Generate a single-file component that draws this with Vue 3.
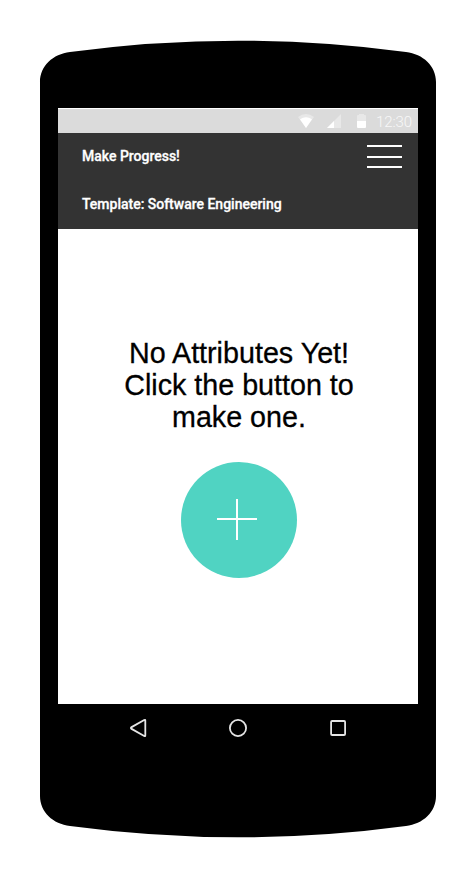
<script setup>
const title = 'Make Progress!'
const template = 'Template: Software Engineering'
const message = ['No Attributes Yet!', 'Click the button to', 'make one.']
</script>

<template>
  <main class="stage">
    <svg class="shell" viewBox="0 0 476 878" aria-hidden="true">
      <path d="M40 82C40 66 53 54 70 52Q238 29.4 406 52C423 54 436 66 436 82V796C436 812 423 824 406 826Q238 848.6 70 826C53 824 40 812 40 796Z" />
    </svg>
    <section class="screen">
      <div class="status">
        <svg class="wifi" viewBox="0 0 16 14">
          <path class="faint" d="M0 3Q8 -3 16 3L8 14Z" />
          <path class="bright" d="M2 5.3Q8 1 14 5.3L8 14Z" />
        </svg>
        <svg class="signal" viewBox="0 0 14 14">
          <path class="faint" d="M0 14L14 0V14Z" />
          <path class="bright" d="M0 14L7 7V14Z" />
        </svg>
        <svg class="battery" viewBox="0 0 9 14">
          <path class="faint" d="M0 2Q0 1 1 1H2V0H7V1H8Q9 1 9 2V7H0Z" />
          <path class="bright" d="M0 7H9V13Q9 14 8 14H1Q0 14 0 13Z" />
        </svg>
        <span class="time">12:30</span>
      </div>
      <header class="header">
        <div class="row">
          <h1 class="label">{{ title }}</h1>
          <button class="menu" aria-label="Menu">
            <svg viewBox="0 0 35 23"><path d="M0 1H35M0 12H35M0 22H35" /></svg>
          </button>
        </div>
        <div class="row">
          <h2 class="label">{{ template }}</h2>
        </div>
      </header>
      <div class="content">
        <p class="message">
          <span v-for="line in message" :key="line">{{ line }}</span>
        </p>
        <button class="add" aria-label="Add">
          <svg viewBox="0 0 116 116"><path d="M36 57H76M56 37V78" /></svg>
        </button>
      </div>
    </section>
    <nav class="nav">
      <svg viewBox="0 0 20 20"><path d="M17.3 2.6V17.4Q17.3 18.6 16.2 18L3.6 10.9Q2.2 10 3.6 9.1L16.2 2Q17.3 1.4 17.3 2.6Z" /></svg>
      <svg viewBox="0 0 20 20"><circle cx="10" cy="10" r="8.1" /></svg>
      <svg viewBox="0 0 20 20"><rect x="3.1" y="3" width="14" height="14" rx="1" /></svg>
    </nav>
  </main>
</template>

<style>
body {
  margin: 0;
  background: #fff;
}
</style>

<style scoped>
.stage {
  position: relative;
  width: 476px;
  height: 878px;
  box-sizing: border-box;
  padding: 108px 58px 0;
  overflow: hidden;
}
.shell {
  position: absolute;
  inset: 0;
  width: 476px;
  height: 878px;
}
.screen {
  position: relative;
  height: 596px;
  background: #fff;
}
.status {
  display: flex;
  align-items: flex-start;
  box-sizing: border-box;
  height: 25px;
  padding: 0 6px 0 240px;
  border-top: 1px solid #fff;
  background: #dbdbdb;
}
.status svg {
  flex: none;
  height: 14px;
  margin-top: 5px;
}
.wifi {
  width: 16px;
}
.signal {
  width: 14px;
  margin-left: 13px;
}
.battery {
  width: 9px;
  margin-left: 16px;
}
.faint {
  fill: #e8e8e8;
}
.bright {
  fill: #fff;
}
.time {
  margin-left: 10px;
  font: 300 15px/26px Roboto, sans-serif;
  letter-spacing: -0.1px;
  color: #f8f8f8;
}
.header {
  height: 96px;
  background: #333;
}
.row {
  display: flex;
  align-items: center;
  justify-content: space-between;
  box-sizing: border-box;
  height: 48px;
  padding: 0 16px 2px 24px;
}
.label {
  margin: 0;
  font: 500 14px/20px Roboto, sans-serif;
  letter-spacing: -0.01px;
  -webkit-text-stroke: 0.3px #fff;
  color: #fff;
  white-space: nowrap;
}
.menu,
.add {
  display: block;
  padding: 0;
  border: 0;
  background: none;
}
.menu svg {
  display: block;
  width: 35px;
  height: 23px;
}
.menu {
  height: 24px;
  margin-top: 1px;
}
.menu path,
.add path {
  fill: none;
  stroke: #fff;
  stroke-width: 2;
}
.content {
  display: flex;
  flex-direction: column;
  align-items: center;
  padding: 108px 0 0 2px;
}
.message {
  display: flex;
  flex-direction: column;
  align-items: center;
  margin: 0;
  font: 28.7px/32px "Liberation Sans", sans-serif;
  -webkit-text-stroke: 0.3px #000;
  color: #000;
  white-space: nowrap;
}
.add {
  width: 116px;
  height: 116px;
  margin-top: 29px;
  border-radius: 50%;
  background: #50d3c2;
}
.add svg {
  display: block;
  width: 116px;
  height: 116px;
}
.nav {
  position: relative;
  display: flex;
  justify-content: space-between;
  padding: 14px 70px;
}
.nav svg {
  width: 20px;
  height: 20px;
  fill: none;
  stroke: #e5e5e5;
  stroke-width: 1.8;
}
</style>
